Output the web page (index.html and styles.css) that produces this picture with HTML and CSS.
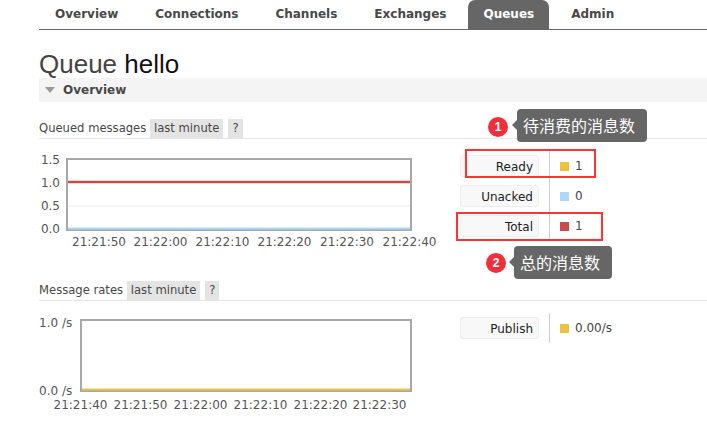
FILE: index.html
```html
<!DOCTYPE html>
<html lang="en">
<head>
<meta charset="utf-8">
<title>Queue hello</title>
<link rel="stylesheet" href="styles.css">
</head>
<body>
<nav class="menu">
  <ul class="tabs">
    <li class="tab">Overview</li>
    <li class="tab">Connections</li>
    <li class="tab">Channels</li>
    <li class="tab">Exchanges</li>
    <li class="tab active">Queues</li>
    <li class="tab">Admin</li>
  </ul>
</nav>
<main class="main">
  <h1 class="title">Queue <b class="title-name">hello</b></h1>
  <section class="section">
    <div class="section-head"><span class="tri"></span>Overview</div>

    <div class="chart-heading">Queued messages <span class="chip">last minute</span><span class="chip">?</span></div>
    <div class="chart-row">
      <svg class="chart" width="421" height="100" viewBox="0 0 421 100">
        <line class="grid" x1="29" y1="56" x2="371" y2="56"/>
        <rect class="plot" x="28" y="9" width="344" height="71"/>
        <line x1="29" y1="32" x2="371" y2="32" stroke="#cb4b4b" stroke-width="2.5"/>
        <line x1="29" y1="78.5" x2="371" y2="78.5" stroke="#afd8f8" stroke-width="2"/>
        <text class="ax" x="21" y="14" text-anchor="end">1.5</text>
        <text class="ax" x="21" y="37" text-anchor="end">1.0</text>
        <text class="ax" x="21" y="60" text-anchor="end">0.5</text>
        <text class="ax" x="21" y="83" text-anchor="end">0.0</text>
        <text class="ax" x="60" y="96" text-anchor="middle">21:21:50</text>
        <text class="ax" x="121.5" y="96" text-anchor="middle">21:22:00</text>
        <text class="ax" x="183.5" y="96" text-anchor="middle">21:22:10</text>
        <text class="ax" x="245.5" y="96" text-anchor="middle">21:22:20</text>
        <text class="ax" x="308" y="96" text-anchor="middle">21:22:30</text>
        <text class="ax" x="370.5" y="96" text-anchor="middle">21:22:40</text>
      </svg>
      <div class="legend">
        <div class="leg-label"><span class="leg-box">Ready</span></div>
        <div class="leg-value"><span class="sq sq-yellow"></span>1</div>
        <div class="leg-label"><span class="leg-box">Unacked</span></div>
        <div class="leg-value"><span class="sq sq-blue"></span>0</div>
        <div class="leg-label"><span class="leg-box">Total</span></div>
        <div class="leg-value"><span class="sq sq-red"></span>1</div>
      </div>
    </div>

    <div class="chart-heading">Message rates <span class="chip">last minute</span><span class="chip">?</span></div>
    <div class="chart-row">
      <svg class="chart" width="421" height="100" viewBox="0 0 421 100">
        <rect class="plot" x="42" y="8" width="330" height="71"/>
        <line x1="43" y1="77.5" x2="371" y2="77.5" stroke="#edc240" stroke-width="2"/>
        <text class="ax" x="0" y="15">1.0 /s</text>
        <text class="ax" x="0" y="83">0.0 /s</text>
        <text class="ax" x="41.5" y="97" text-anchor="middle">21:21:40</text>
        <text class="ax" x="101.5" y="97" text-anchor="middle">21:21:50</text>
        <text class="ax" x="161.5" y="97" text-anchor="middle">21:22:00</text>
        <text class="ax" x="221.5" y="97" text-anchor="middle">21:22:10</text>
        <text class="ax" x="281.5" y="97" text-anchor="middle">21:22:20</text>
        <text class="ax" x="340.5" y="97" text-anchor="middle">21:22:30</text>
      </svg>
      <div class="legend">
        <div class="leg-label"><span class="leg-box">Publish</span></div>
        <div class="leg-value"><span class="sq sq-yellow"></span>0.00/s</div>
      </div>
    </div>
  </section>
</main>

<div class="mark mark-ready"></div>
<div class="mark mark-total"></div>
<div class="badge badge-1">1</div>
<div class="tip tip-1">待消费的消息数</div>
<div class="badge badge-2">2</div>
<div class="tip tip-2">总的消息数</div>
</body>
</html>
```
FILE: styles.css
```css
html, body {
  margin: 0;
  padding: 0;
  background: #fff;
}
body {
  font-family: "DejaVu Sans", Verdana, sans-serif;
  font-size: 12px;
  color: #484848;
  width: 707px;
  height: 427px;
  overflow: hidden;
  position: relative;
}
.menu {
  margin-left: 39px;
  border-bottom: 1px solid #666;
}
.tabs {
  list-style: none;
  margin: 0;
  padding: 0 0 0 1px;
  display: flex;
  gap: 7px;
}
.tab {
  height: 29px;
  line-height: 29px;
  padding: 0 15px;
  font-weight: bold;
  font-size: 12px;
  color: #484848;
  border-radius: 7px 7px 0 0;
}
.tab.active {
  background: #666;
  color: #fff;
}
.main {
  padding-left: 39px;
}
.title {
  margin: 20px 0 0;
  font-family: "Liberation Sans", Arial, sans-serif;
  font-weight: normal;
  font-size: 26px;
  line-height: 28px;
  color: #444;
}
.title-name {
  font-weight: normal;
  color: #111;
}
.section-head {
  height: 24px;
  line-height: 24px;
  background: #f4f4f4;
  padding-left: 6px;
  font-weight: bold;
  font-size: 12px;
  color: #484848;
  display: flex;
  align-items: center;
}
.tri {
  width: 0;
  height: 0;
  border-left: 5px solid transparent;
  border-right: 5px solid transparent;
  border-top: 6px solid #999;
  margin-right: 8px;
}
.chart-heading {
  display: flex;
  align-items: stretch;
  height: 19px;
  line-height: 19px;
  border-bottom: 1px solid #e6e6e6;
  font-size: 11.6px;
  color: #484848;
  margin-top: 17px;
  white-space: pre;
}
.chip {
  background: #e4e4e4;
  padding: 0 4px;
  margin-right: 5px;
  color: #484848;
}
.chart-row {
  display: flex;
  align-items: flex-start;
  margin: 11px 0 31px;
}
.chart-row + .chart-heading {
  margin-top: 0;
}
.chart {
  display: block;
  flex: none;
}
.plot {
  fill: none;
  stroke: #a8a8a8;
  stroke-width: 2;
}
.grid {
  stroke: #ececec;
  stroke-width: 1;
}
.ax {
  font-family: "DejaVu Sans", Verdana, sans-serif;
  font-size: 12px;
  fill: #545454;
}
.legend {
  margin-top: 1px;
  display: grid;
  grid-template-columns: 89px auto;
  grid-auto-rows: 30px;
}
.leg-label {
  display: flex;
  align-items: center;
  padding-right: 10px;
}
.leg-box {
  width: 79px;
  height: 22px;
  line-height: 22px;
  box-sizing: border-box;
  background: #f8f8f8;
  border: 1px solid #eee;
  border-radius: 3px;
  text-align: right;
  padding-right: 5px;
  color: #222;
}
.leg-value {
  border-left: 1px solid #ccc;
  padding-left: 10px;
  display: flex;
  align-items: center;
  gap: 6px;
  color: #444;
}
.sq {
  width: 9px;
  height: 9px;
  display: inline-block;
}
.sq-yellow { background: #edc240; }
.sq-blue { background: #afd8f8; }
.sq-red { background: #cb4b4b; }

/* annotations */
.mark {
  position: absolute;
  box-sizing: border-box;
  border: 2px solid #f33;
}
.mark-ready {
  left: 465px;
  top: 149px;
  width: 131px;
  height: 29px;
}
.mark-total {
  left: 456px;
  top: 212px;
  width: 147px;
  height: 29px;
}
.badge {
  position: absolute;
  width: 20px;
  height: 20px;
  border-radius: 50%;
  background: #f03038;
  color: #fff;
  font-family: "Liberation Sans", Arial, sans-serif;
  font-weight: bold;
  font-size: 12px;
  line-height: 20px;
  text-align: center;
}
.badge-1 { left: 488px; top: 117px; }
.badge-2 { left: 486px; top: 253px; }
.tip {
  position: absolute;
  height: 33px;
  line-height: 33px;
  background: #666;
  color: #fff;
  border-radius: 4px;
  font-family: "Noto Sans CJK SC", sans-serif;
  font-size: 16px;
  padding: 0 12px 0 6px;
  white-space: nowrap;
}
.tip::before {
  content: "";
  position: absolute;
  left: -5px;
  top: 11px;
  border-top: 5px solid transparent;
  border-bottom: 5px solid transparent;
  border-right: 5px solid #666;
}
.tip-1 { left: 517px; top: 109px; }
.tip-2 { left: 514px; top: 246px; }
```
